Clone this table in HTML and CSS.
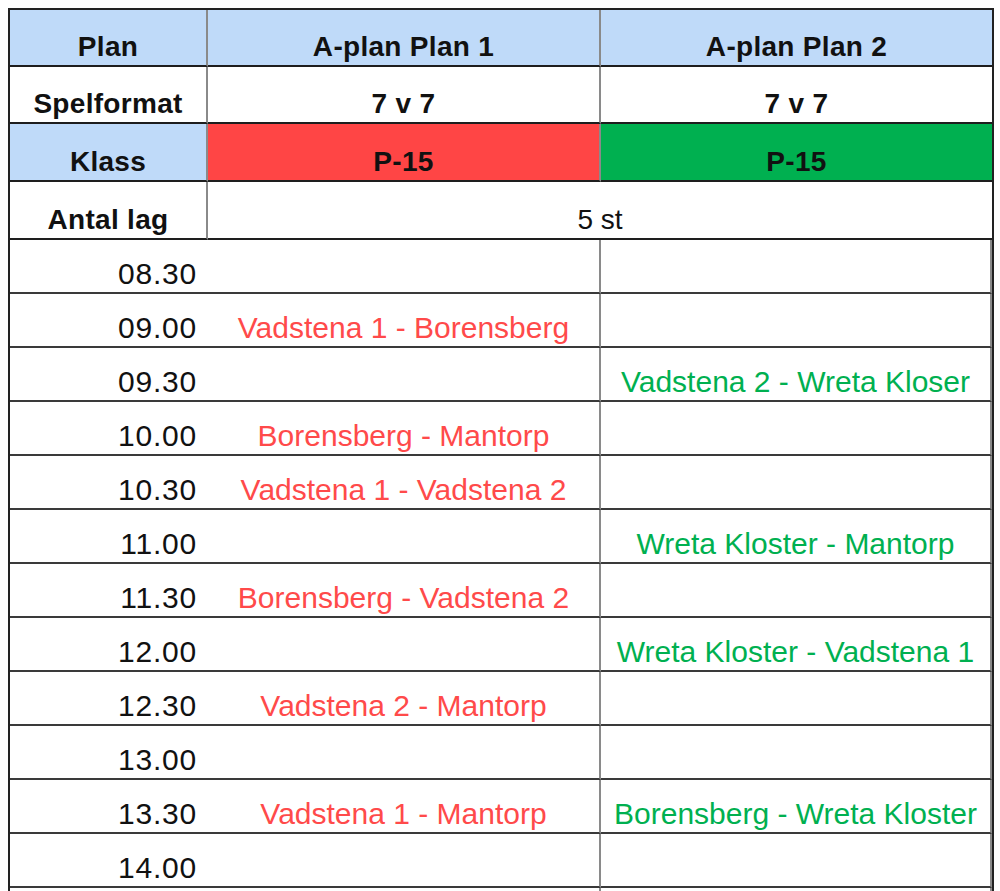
FILE: index.html
```html
<!DOCTYPE html>
<html lang="sv">
<head>
<meta charset="utf-8">
<title>Spelschema P-15</title>
<link rel="stylesheet" href="styles.css">
</head>
<body>
<div class="sheet">
  <div class="cell head blue">Plan</div>
  <div class="cell head blue">A-plan Plan 1</div>
  <div class="cell head blue">A-plan Plan 2</div>

  <div class="cell head">Spelformat</div>
  <div class="cell head">7 v 7</div>
  <div class="cell head">7 v 7</div>

  <div class="cell head blue">Klass</div>
  <div class="cell head red">P-15</div>
  <div class="cell head green">P-15</div>

  <div class="cell head">Antal lag</div>
  <div class="cell plain span2">5 st</div>

  <div class="cell time">08.30</div>
  <div class="cell game"></div>
  <div class="cell game"></div>

  <div class="cell time">09.00</div>
  <div class="cell game r">Vadstena 1 - Borensberg</div>
  <div class="cell game"></div>

  <div class="cell time">09.30</div>
  <div class="cell game"></div>
  <div class="cell game g">Vadstena 2 - Wreta Kloser</div>

  <div class="cell time">10.00</div>
  <div class="cell game r">Borensberg - Mantorp</div>
  <div class="cell game"></div>

  <div class="cell time">10.30</div>
  <div class="cell game r">Vadstena 1 - Vadstena 2</div>
  <div class="cell game"></div>

  <div class="cell time">11.00</div>
  <div class="cell game"></div>
  <div class="cell game g">Wreta Kloster - Mantorp</div>

  <div class="cell time">11.30</div>
  <div class="cell game r">Borensberg - Vadstena 2</div>
  <div class="cell game"></div>

  <div class="cell time">12.00</div>
  <div class="cell game"></div>
  <div class="cell game g">Wreta Kloster - Vadstena 1</div>

  <div class="cell time">12.30</div>
  <div class="cell game r">Vadstena 2 - Mantorp</div>
  <div class="cell game"></div>

  <div class="cell time">13.00</div>
  <div class="cell game"></div>
  <div class="cell game"></div>

  <div class="cell time">13.30</div>
  <div class="cell game r">Vadstena 1 - Mantorp</div>
  <div class="cell game g">Borensberg - Wreta Kloster</div>

  <div class="cell time">14.00</div>
  <div class="cell game"></div>
  <div class="cell game"></div>

  <div class="cell time"></div>
  <div class="cell game"></div>
  <div class="cell game"></div>
</div>
</body>
</html>
```

FILE: styles.css
```css
html {
  overflow: hidden;
  background: #ffffff;
}

body {
  margin: 0;
  padding: 8px 0 0 8px;
  background: #ffffff;
  font-family: "Liberation Sans", Arial, sans-serif;
  color: #111111;
}

.sheet {
  display: grid;
  grid-template-columns: 198px 393px 391px;
  grid-template-rows: 57px 57px 58px 58px repeat(13, 54px);
  width: 986px;
  border-top: 2px solid #222222;
  border-left: 2px solid #222222;
  border-right: 2px solid #222222;
  box-sizing: border-box;
}

.cell {
  display: flex;
  align-items: flex-end;
  justify-content: center;
  border-bottom: 2px solid #3a3a3a;
  border-right: 2px solid #8a8a8a;
  box-sizing: border-box;
  line-height: 30px;
  padding-bottom: 3px;
  white-space: nowrap;
  overflow: hidden;
}

.cell:nth-child(3n) {
  border-right: none;
}

.head {
  font-size: 28px;
  font-weight: bold;
  letter-spacing: 0.3px;
  border-bottom-color: #1e1e1e;
}

.plain {
  font-size: 28px;
  border-bottom-color: #1e1e1e;
}

.span2 {
  grid-column: span 2;
  border-right: none;
}

.blue {
  background: #bfdaf9;
}

.red {
  background: #ff4545;
}

.green {
  background: #00b050;
}

.time {
  justify-content: flex-end;
  padding-right: 11px;
  font-size: 30px;
  letter-spacing: 0.8px;
}

.game {
  font-size: 30px;
}

.r {
  color: #ff4a4a;
}

.g {
  color: #00b050;
}
```
